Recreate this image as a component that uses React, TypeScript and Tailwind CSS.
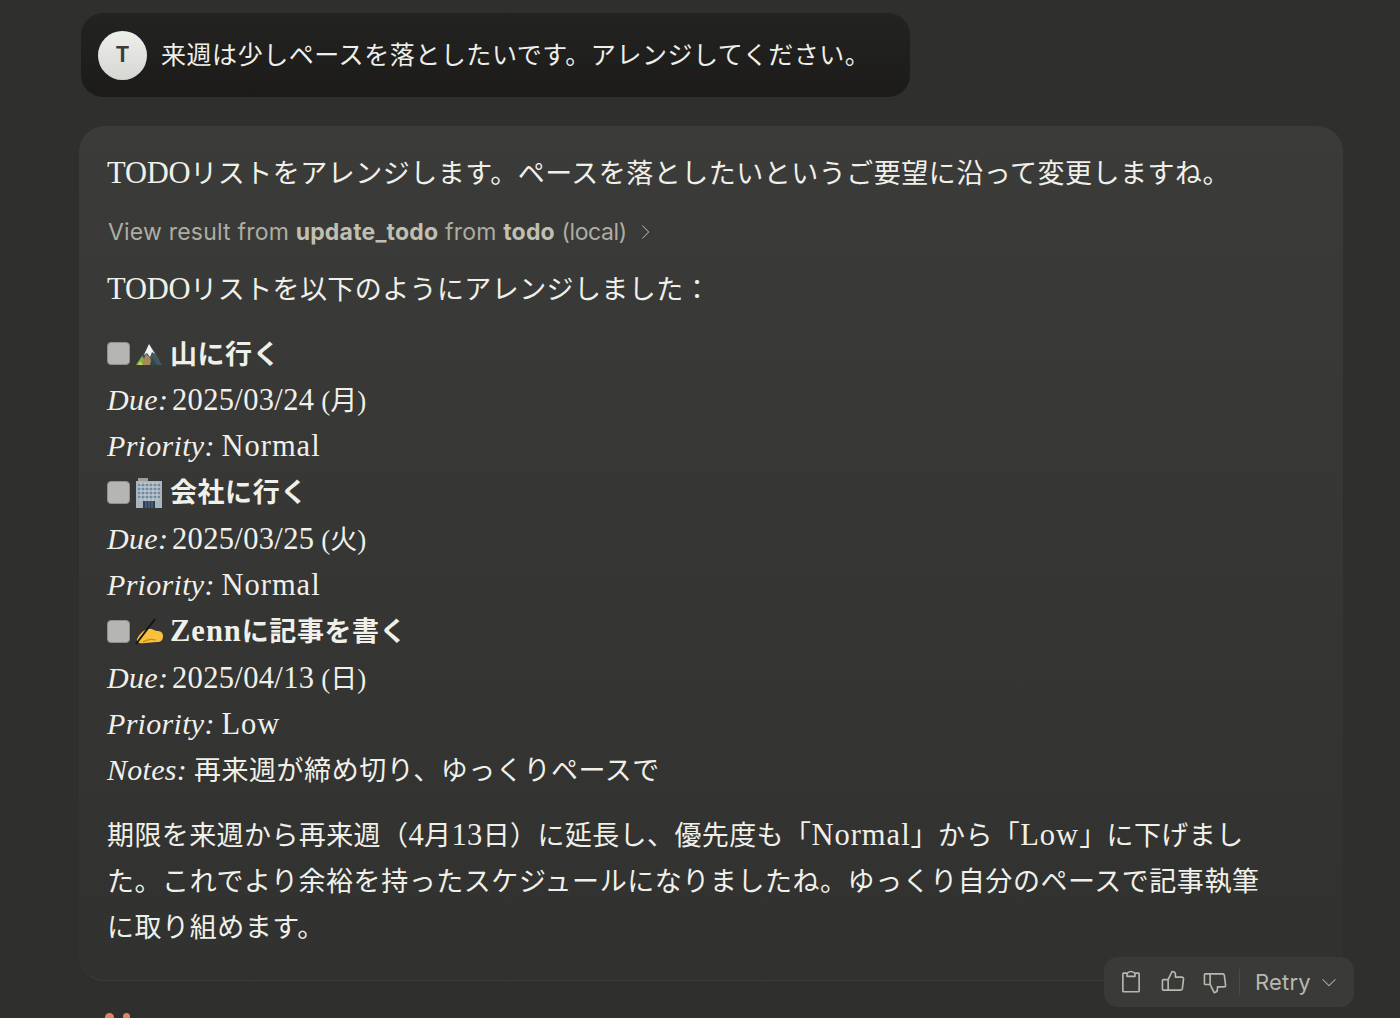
import React from "react";
import {
  PiCaretDownLight,
  PiCaretRightLight,
  PiClipboard,
  PiThumbsDown,
  PiThumbsUp,
} from "react-icons/pi";

const serif = "font-['Liberation_Serif','Noto_Sans_CJK_JP',serif]";

// Latin runs in the reference's serif are wider than Times, so they get a bigger size
const L = ({ children }: { children: React.ReactNode }) => (
  <span className="text-[30.5px] leading-none tracking-[0.35px]">{children}</span>
);

const Word = ({ children }: { children: React.ReactNode }) => (
  <span className="text-[30.5px] leading-none tracking-[1px]">{children}</span>
);

const Todo = () => <span className="text-[30.5px] leading-none tracking-[-0.2px]">TODO</span>;

const Mountain = () => (
  <svg width="28" height="24" viewBox="0 0 28 24" className="shrink-0">
    <path d="M1 23 L9 11 L14 2 L20 10 L27 23 Z" fill="#46565c" />
    <path d="M1 23 L7 14 L13 23 Z" fill="#7fae4e" />
    <path d="M7 23 L11 12 L15 16 L17 23 Z" fill="#a98a55" />
    <path d="M15 23 L17 15 L22 23 Z" fill="#33474f" />
    <path d="M9 13 L14 2 L20 12 L17 10 L15 15 L12 11 Z" fill="#f1f4f6" />
    <path d="M3 23 L5 19 L8 23 Z" fill="#c9cf5a" />
  </svg>
);

const Building = () => (
  <svg width="28" height="32" viewBox="0 0 28 32" className="shrink-0">
    <rect x="3" y="1" width="10" height="3" fill="#a39d93" />
    <rect x="1" y="4" width="26" height="27" fill="#a9b6c0" />
    <path d="M3 8h22M3 12h22M3 16h22M3 20h22" stroke="#5f7d96" strokeWidth="1.7" />
    <path d="M6 5v19M10 5v19M14 5v19M18 5v19M22 5v19" stroke="#c8d2da" strokeWidth="1" />
    <rect x="8" y="24" width="12" height="7" fill="#2f3d50" />
    <path d="M11 24v7M14 24v7M17 24v7" stroke="#5a7fa0" strokeWidth="1" />
  </svg>
);

const WritingHand = () => (
  <svg width="29" height="27" viewBox="0 0 29 27" className="shrink-0">
    <path
      d="M2 21 C5 15 9 12 13 11 C17 10 19 13 22 13 C25 13 28 14 28 18 C28 22 26 24 22 24 L10 25 C6 26 1 25 2 21 Z"
      fill="#f8c03c"
    />
    <path d="M8 24 C12 21 17 21 21 22" stroke="#c98a1c" strokeWidth="1.2" fill="none" />
    <path d="M1 26 L20 1" stroke="#141414" strokeWidth="2" />
  </svg>
);

const Check = () => (
  <span className="w-[23px] h-[23px] rounded-[4px] bg-[#b5b5b3] border border-[#8f8f8d] shrink-0" />
);

const TodoHead = ({ icon, label }: { icon: React.ReactNode; label: React.ReactNode }) => (
  <div className="flex items-center h-[46.3px] gap-[6px] tracking-[0.55px]">
    <span className="-mt-[2px] flex items-center gap-[5px] w-[57px]">
      <Check />
      {icon}
    </span>
    <span className="font-bold">{label}</span>
  </div>
);

const Field = ({ name, value }: { name: string; value: React.ReactNode }) => (
  <div className="h-[46.3px]">
    <em className="italic text-[30px] leading-none tracking-[0.3px]">{name}:</em> {value}
  </div>
);

const Day = ({ date, day }: { date: string; day: string }) => (
  <span className="-ml-[3px]">
    <L>{date}</L> ({day})
  </span>
);

const todos = [
  {
    icon: <Mountain />,
    label: "山に行く",
    fields: [
      { name: "Due", value: <Day date="2025/03/24" day="月" /> },
      { name: "Priority", value: <Word>Normal</Word> },
    ],
  },
  {
    icon: <Building />,
    label: "会社に行く",
    fields: [
      { name: "Due", value: <Day date="2025/03/25" day="火" /> },
      { name: "Priority", value: <Word>Normal</Word> },
    ],
  },
  {
    icon: <WritingHand />,
    label: (
      <>
        <Word>Zenn</Word>に記事を書く
      </>
    ),
    fields: [
      { name: "Due", value: <Day date="2025/04/13" day="日" /> },
      { name: "Priority", value: <Word>Low</Word> },
      { name: "Notes", value: <span className="tracking-[0.55px]">再来週が締め切り、ゆっくりペースで</span> },
    ],
  },
];

const App = () => {
  return (
    <main className="relative w-[1400px] h-[1018px] overflow-hidden bg-[#2f2f2d] pt-[13px] pl-[79px]">
      <div className="ml-[2px] w-[829px] h-[84px] rounded-[22px] bg-gradient-to-b from-[#232322] to-[#1c1b1a] flex items-center pl-[17px] gap-[14px]">
        <div className="w-[49px] h-[49px] rounded-full bg-gradient-to-b from-[#eeeeeb] to-[#d6d6d3] flex items-center justify-center text-[#3a3a38] font-bold text-[21px] font-['Inter',sans-serif]">
          T
        </div>
        <p className="font-['Noto_Sans_CJK_JP',sans-serif] text-[25px] tracking-[0.55px] -mt-[2px] text-[#efefe9]">
          来週は少しペースを落としたいです。アレンジしてください。
        </p>
      </div>

      <article
        className={`mt-[29px] w-[1264px] h-[855px] rounded-[26px] bg-gradient-to-b from-[#3b3b39] to-[#31312f] border-b border-[#3d3d3b] pl-[28px] pt-[25px] pr-[70px] text-[27px] leading-[46.3px] text-[#f0f0ea] ${serif}`}
      >
        <p className="tracking-[0.5px]">
          <Todo />リストをアレンジします。ペースを落としたいというご要望に沿って変更しますね。
        </p>

        <div className="mt-[12px] h-[46px] flex items-center gap-[8px] font-['Inter',sans-serif] text-[23px] text-[#aeada2] tracking-[0.2px]">
          <span className="ml-[1px]">
            View result from <b className="font-bold text-[#c0bfb2]">update_todo</b> from{" "}
            <b className="font-bold text-[#c0bfb2]">todo</b> <span className="tracking-[-0.4px]">(local)</span>
          </span>
          <PiCaretRightLight size={20} />
        </div>

        <p className="mt-[12px] tracking-[0.4px]">
          <Todo />リストを以下のようにアレンジしました：
        </p>

        <div className="mt-[18px]">
          {todos.map((todo, i) => (
            <div key={i}>
              <TodoHead icon={todo.icon} label={todo.label} />
              {todo.fields.map((f) => (
                <Field key={f.name} name={f.name} value={f.value} />
              ))}
            </div>
          ))}
        </div>

        <div className="mt-[18px] tracking-[0.55px]">
          <p className="tracking-[0.4px]">
            期限を来週から再来週（<L>4</L>月<L>13</L>日）に延長し、優先度も「<Word>Normal</Word>」から「<Word>Low</Word>」に下げまし
          </p>
          <p>た。これでより余裕を持ったスケジュールになりましたね。ゆっくり自分のペースで記事執筆</p>
          <p>に取り組めます。</p>
        </div>
      </article>

      <div className="absolute left-[1104px] top-[957px] w-[250px] h-[50px] rounded-[14px] bg-[#3a3a38] flex items-center pl-[14px] text-[#b9b8ae]">
        <PiClipboard size={26} />
        <PiThumbsUp size={26} className="ml-[16px]" />
        <PiThumbsDown size={26} className="ml-[16px]" />
        <span className="ml-[11px] w-px h-[26px] bg-[#4a4a48]" />
        <span className="ml-[15px] font-['Inter',sans-serif] text-[22px] tracking-[0.2px]">Retry</span>
        <PiCaretDownLight size={20} className="ml-[8px]" />
      </div>

      {/* top of the logo peeking in at the bottom edge */}
      <div className="absolute left-[105px] top-[1013px] flex gap-[9px]">
        <span className="w-[9px] h-[9px] rounded-full bg-[#e0845f]" />
        <span className="w-[7px] h-[9px] rounded-full bg-[#e0845f]" />
      </div>
    </main>
  );
};

export default App;
